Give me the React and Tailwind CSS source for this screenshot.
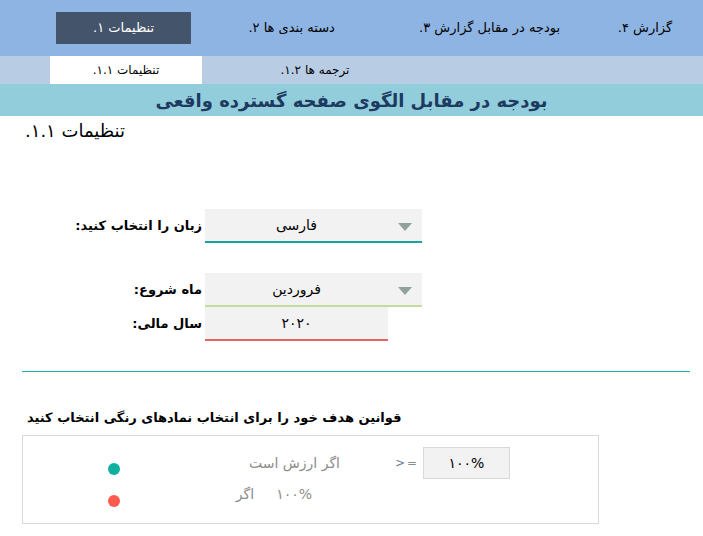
import React from 'react';

const font = { fontFamily: '"DejaVu Sans", "Noto Sans", sans-serif' };

function Arrow() {
  return (
    <svg width="14" height="8" viewBox="0 0 14 8" className="shrink-0">
      <polygon points="0,0 14,0 7,8" fill="#8fa39b" />
    </svg>
  );
}

function Select({ value, line }) {
  return (
    <div className="flex flex-col w-[217px] bg-[#f2f2f2]">
      <div className="flex items-center h-[32px]">
        <div className="w-[183px] text-center text-[14px] text-black">
          <span dir="rtl">{value}</span>
        </div>
        <div className="flex-1 flex justify-center pt-[3px]">
          <Arrow />
        </div>
      </div>
      <div className={`h-[2px] ${line}`} />
    </div>
  );
}

function Label({ children }) {
  return (
    <div className="w-[205px] pr-[3px] flex justify-end text-[13px] font-bold text-black">
      <span dir="rtl">{children}</span>
    </div>
  );
}

export default function App() {
  const tabs = [
    { label: 'تنظیمات ۱.', w: 'w-[140px]', active: true },
    { label: 'دسته بندی ها ۲.', w: 'w-[208px]' },
    { label: 'بودجه در مقابل گزارش ۳.', w: 'w-[202px]' },
    { label: 'گزارش ۴.', w: 'w-[120px]' },
  ];

  return (
    <div className="w-[703px] h-[536px] bg-white overflow-hidden" style={font}>
      {/* main tabs */}
      <div className="h-[56px] bg-[#8eb4e3] flex items-center pl-[56px]">
        {tabs.map((t) => (
          <div
            key={t.label}
            className={`${t.w} h-[32px] flex items-center justify-center text-[13px] ${
              t.active ? 'bg-[#44546a] text-white' : 'text-black'
            }`}
          >
            <span dir="rtl">{t.label}</span>
          </div>
        ))}
      </div>

      {/* sub tabs */}
      <div className="h-[28px] bg-[#b8cce4] flex pl-[50px]">
        <div className="w-[152px] bg-white flex items-center justify-center text-[12px] text-black">
          <span dir="rtl">تنظیمات ۱.۱.</span>
        </div>
        <div className="w-[226px] flex items-center justify-center text-[12px] text-black">
          <span dir="rtl">ترجمه ها ۱.۲.</span>
        </div>
      </div>

      {/* title */}
      <div className="h-[32px] bg-[#92cddc] flex items-center justify-center">
        <span dir="rtl" className="text-[18px] font-bold text-[#1f3a5f]">
          بودجه در مقابل الگوی صفحه گسترده واقعی
        </span>
      </div>

      <div className="pl-[25px] pt-[2px] text-[18px] leading-[26px] text-black">
        <span dir="rtl">تنظیمات ۱.۱.</span>
      </div>

      {/* form */}
      <div className="mt-[65px] flex flex-col">
        <div className="flex items-center">
          <Label>زبان را انتخاب کنید:</Label>
          <Select value="فارسی" line="bg-[#1aa39b]" />
        </div>
        <div className="flex items-center mt-[30px]">
          <Label>ماه شروع:</Label>
          <Select value="فروردین" line="bg-[#c3dc9d]" />
        </div>
        <div className="flex items-center">
          <Label>سال مالی:</Label>
          <div className="flex flex-col w-[183px] bg-[#f2f2f2]">
            <div className="h-[32px] flex items-center justify-center text-[14px] text-black">
              <span dir="rtl">۲۰۲۰</span>
            </div>
            <div className="h-[2px] bg-[#e46464]" />
          </div>
        </div>
      </div>

      <div className="mt-[30px] ml-[22px] w-[668px] h-px bg-[#12b3a5]" />

      <div className="mt-[36px] pl-[27px] text-[13px] leading-[20px] font-bold text-black">
        <span dir="rtl">قوانین هدف خود را برای انتخاب نمادهای رنگی انتخاب کنید</span>
      </div>

      {/* rules box */}
      <div className="mt-[7px] ml-[22px] w-[577px] h-[89px] border border-[#d9d9d9] pt-[11px]">
        <div className="flex items-start h-[32px]">
          <div className="ml-[85px] mt-[16px] w-[12px] h-[12px] rounded-full bg-[#0fb0a0]" />
          <div className="w-[220px] h-[32px] flex items-center justify-end text-[14px] text-[#8c8c8c]">
            <span dir="rtl">اگر ارزش است</span>
          </div>
          <div className="ml-[55px] w-[22px] h-[32px] flex items-center justify-between text-[12px] text-[#8c8c8c]">
            <span className="text-[#6f7f95]">&gt;</span>
            <span>=</span>
          </div>
          <div className="ml-[6px] w-[87px] h-[32px] bg-[#f2f2f2] border border-[#d9d9d9] flex items-center justify-center text-[14px] text-black">
            ۱۰۰%
          </div>
        </div>
        <div className="flex items-start mt-[5px]">
          <div className="ml-[85px] mt-[11px] w-[12px] h-[12px] rounded-full bg-[#ff5a50]" />
          <div className="w-[192px] h-[20px] flex items-center justify-end gap-[22px] text-[14px] text-[#8c8c8c]">
            <span dir="rtl">اگر</span>
            <span>۱۰۰%</span>
          </div>
        </div>
      </div>
    </div>
  );
}
